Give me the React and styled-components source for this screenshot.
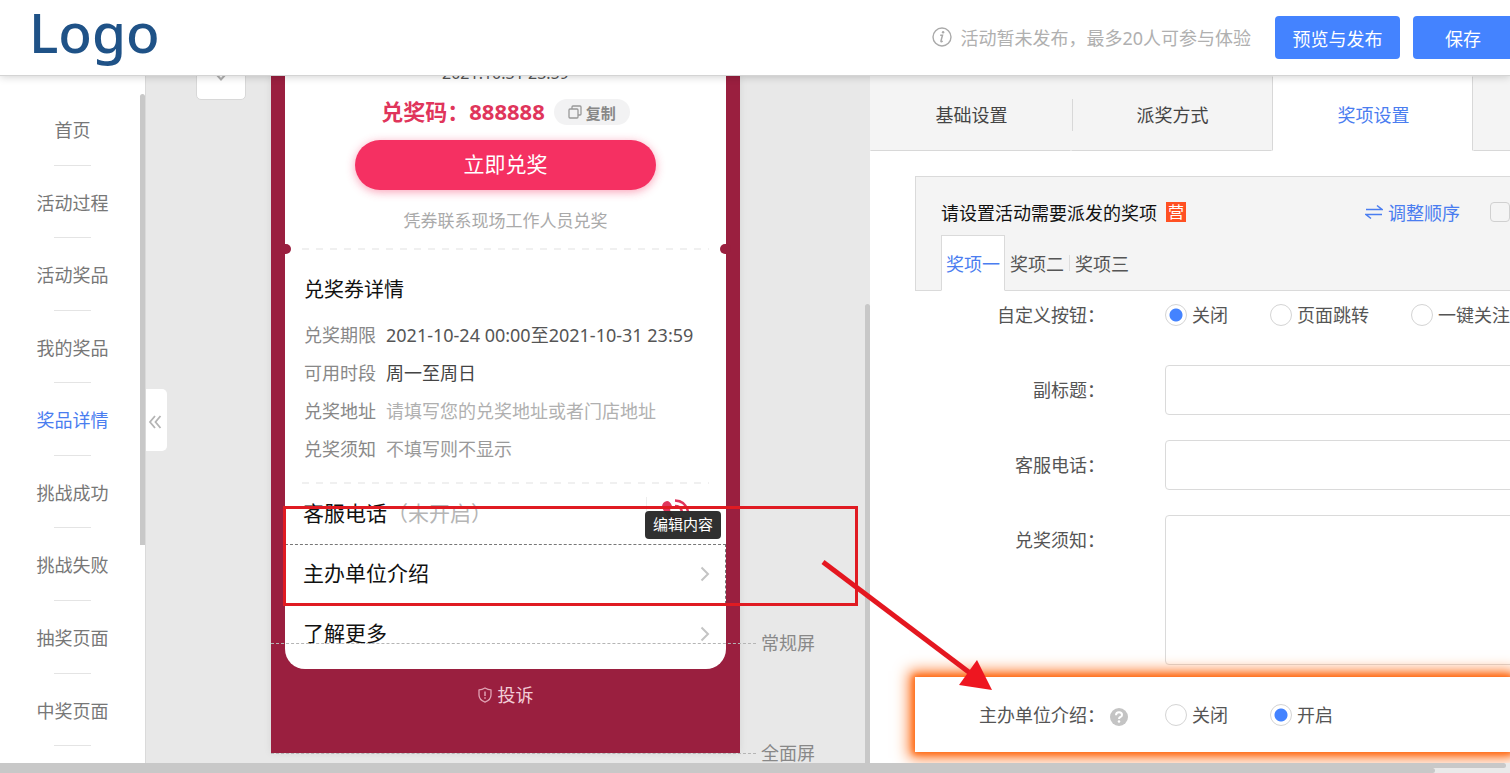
import React from 'react';
import styled, { createGlobalStyle, css } from 'styled-components';

const GlobalStyle = createGlobalStyle`
  * {
    box-sizing: border-box;
  }
  body {
    margin: 0;
    font-family: "Noto Sans", "Noto Sans CJK SC", sans-serif;
    font-size: 18px;
    color: #555555;
    background: #ffffff;
  }
  button, input, textarea {
    font-family: inherit;
    font-size: inherit;
  }
`;

const StyledApp = styled.div`
  display: flex;
  flex-direction: column;
  height: 100vh;
  overflow: hidden;
`;

const StyledHeader = styled.header`
  position: relative;
  z-index: 5;
  display: flex;
  flex: none;
  align-items: center;
  height: 76px;
  padding-left: 29px;
  background: #ffffff;
  border-bottom: 1px solid #d4d4d4;
  box-shadow: 0 1px 8px rgba(0, 0, 0, 0.18);
`;

const StyledLogo = styled.a`
  padding-bottom: 12px;
  color: #1f5287;
  font-size: 55px;
  font-weight: 500;
  line-height: 60px;
  text-decoration: none;
`;

const StyledNotice = styled.p`
  display: flex;
  align-items: center;
  gap: 8px;
  margin: 0 24px 0 auto;
  padding-bottom: 2px;
  color: #b0b0b0;
  white-space: nowrap;
`;

const StyledHeaderButton = styled.button`
  flex: none;
  width: ${props => props.$width};
  height: 43px;
  margin-right: ${props => props.$gap};
  padding: 0;
  color: #ffffff;
  background: #4483ff;
  border: none;
  border-radius: 4px;
  cursor: pointer;
`;

const StyledWorkspace = styled.div`
  position: relative;
  display: flex;
  flex: 1;
  min-height: 0;
`;

const StyledSidebar = styled.nav`
  position: relative;
  display: flex;
  flex: none;
  flex-direction: column;
  width: 146px;
  padding: 17px 0;
  border-right: 1px solid #dadada;
`;

const StyledSidebarLink = styled.a`
  display: flex;
  flex: 1;
  flex-direction: column;
  align-items: center;
  justify-content: space-between;
  padding-top: 23px;
  line-height: 28px;
  color: ${props => (props.$active ? '#4a7df0' : '#777777')};
  text-decoration: none;
  &::after {
    content: "";
    width: 37px;
    height: 1px;
    background: #e4e4e4;
  }
`;

const StyledVerticalThumb = styled.div`
  position: absolute;
  top: ${props => props.$top};
  right: 0;
  bottom: ${props => props.$bottom};
  width: 5px;
  background: #c8c8c8;
  border-radius: 3px 3px 0 0;
`;

const StyledCanvas = styled.main`
  position: relative;
  display: flex;
  flex: 0 0 724px;
  align-items: flex-start;
  justify-content: center;
  padding-right: 5px;
  background: #e8e8e8;
`;

const StyledCollapse = styled.button`
  position: absolute;
  top: 313px;
  left: 0;
  display: flex;
  align-items: center;
  justify-content: center;
  width: 21px;
  height: 62px;
  padding: 3px 4px 0 0;
  background: #ffffff;
  border: none;
  border-radius: 0 5px 5px 0;
`;

const StyledDropHandle = styled.button`
  position: absolute;
  top: -14px;
  left: 50px;
  display: flex;
  align-items: center;
  justify-content: center;
  width: 50px;
  height: 38px;
  padding: 0 0 6px;
  background: #ffffff;
  border: 1px solid #d8d8d8;
  border-radius: 5px;
`;

const StyledPhone = styled.section`
  position: relative;
  width: 469px;
  padding: 0 14px 43px;
  background: #9a1f3f;
  box-shadow: 0 0 8px rgba(0, 0, 0, 0.08);
`;

const StyledCard = styled.div`
  display: flex;
  flex-direction: column;
  padding-bottom: 5px;
  background: #ffffff;
  border-radius: 0 0 20px 20px;
`;

const StyledDate = styled.p`
  margin: -18px 0 0;
  font-size: 16px;
  line-height: 30px;
  text-align: center;
`;

const StyledCode = styled.div`
  display: flex;
  align-items: center;
  justify-content: center;
  gap: 9px;
  height: 48px;
  color: #e0355b;
  font-size: 22px;
  font-weight: bold;
`;

const StyledCodeText = styled.span`
  padding-bottom: 4px;
`;

const StyledCopy = styled.button`
  display: flex;
  align-items: center;
  justify-content: center;
  gap: 4px;
  width: 76px;
  height: 26px;
  padding: 0;
  color: #888888;
  font-size: 15px;
  font-weight: bold;
  background: #f2f2f3;
  border: none;
  border-radius: 13px;
`;

const StyledRedeem = styled.button`
  align-self: center;
  width: 301px;
  height: 50px;
  margin-top: 4px;
  padding: 0 0 4px;
  color: #ffffff;
  font-size: 21px;
  background: #f53062;
  border: none;
  border-radius: 25px;
  box-shadow: 0 2px 10px rgba(245, 48, 98, 0.45);
`;

const StyledHint = styled.p`
  margin: 16px 0 12px;
  color: #aaaaaa;
  font-size: 17px;
  line-height: 30px;
  text-align: center;
`;

const StyledDashes = styled.div`
  position: relative;
  height: 2px;
  margin: 0 17px;
  background: repeating-linear-gradient(90deg, #f0f0f0 0 7px, #ffffff 7px 14px);
  ${props => props.$notched && css`
    &::before,
    &::after {
      content: "";
      position: absolute;
      top: -4px;
      width: 11px;
      height: 10px;
      background: #9a1f3f;
      border-radius: 5px;
    }
    &::before {
      left: -22px;
    }
    &::after {
      right: -22px;
    }
  `}
`;

const StyledCardTitle = styled.h2`
  margin: 20px 19px 6px;
  color: #111111;
  font-size: 20px;
  font-weight: normal;
  line-height: 40px;
`;

const StyledDetails = styled.dl`
  display: grid;
  grid-template-columns: auto 1fr;
  column-gap: 10px;
  margin: 0 19px 14px;
  line-height: 38px;
`;

const StyledTerm = styled.dt`
  color: #888888;
`;

const StyledValue = styled.dd`
  margin: 0;
  color: ${props => props.$color};
  white-space: nowrap;
`;

const StyledCell = styled.div`
  display: flex;
  align-items: center;
  height: 60px;
  padding: 0 15px 0 17px;
  color: #111111;
  font-size: 21px;
  border: 1px dashed ${props => (props.$editing ? '#777777' : 'transparent')};
  svg {
    margin-left: auto;
  }
`;

const StyledCellText = styled.span`
  padding-bottom: 4px;
`;

const StyledMuted = styled.span`
  color: #b5b5b5;
`;

const StyledCall = styled.span`
  display: flex;
  height: 34px;
  margin-left: auto;
  padding: 0 19px 0 14px;
  border-left: 1px solid #eeeeee;
`;

const StyledTooltip = styled.span`
  position: absolute;
  right: 19px;
  bottom: 214px;
  z-index: 3;
  width: 76px;
  height: 28px;
  color: #ffffff;
  font-size: 15px;
  line-height: 26px;
  text-align: center;
  background: rgba(40, 40, 40, 0.96);
  border-radius: 4px;
`;

const StyledComplain = styled.a`
  display: flex;
  align-items: center;
  justify-content: center;
  gap: 6px;
  margin-top: 11px;
  color: #f2cdd8;
  line-height: 30px;
  text-decoration: none;
`;

const StyledFold = styled.div`
  position: absolute;
  bottom: ${props => props.$bottom};
  left: 0;
  z-index: 1;
  width: 485px;
  border-top: 1px dashed #b5b5b5;
`;

const StyledFoldLabel = styled.span`
  position: absolute;
  top: -16px;
  left: 490px;
  color: #888888;
  line-height: 30px;
  white-space: nowrap;
`;

const StyledFrame = styled.div`
  position: absolute;
  right: -118px;
  bottom: 147px;
  left: 12px;
  z-index: 2;
  height: 100px;
  border: 3px solid #e01b22;
`;

const StyledArrow = styled.svg`
  position: absolute;
  top: 480px;
  left: 815px;
  z-index: 4;
`;

const StyledPanel = styled.section`
  display: flex;
  flex: 1;
  flex-direction: column;
  min-width: 0;
  overflow: hidden;
`;

const StyledTabs = styled.div`
  display: flex;
  flex: none;
  height: 75px;
`;

const StyledTab = styled.button`
  position: relative;
  flex: none;
  width: 201px;
  padding: 0 0 0 2px;
  color: ${props => (props.$active ? '#4a7df0' : '#444444')};
  background: ${props => (props.$active ? '#ffffff' : '#f4f4f4')};
  border: 1px solid transparent;
  border-color: ${props => (props.$active ? 'transparent #d8d8d8' : 'transparent transparent #d8d8d8')};
  ${props => props.$divided && css`
    &::after {
      content: "";
      position: absolute;
      top: 22px;
      right: -3px;
      z-index: 1;
      height: 32px;
      border-left: 1px solid #d8d8d8;
    }
  `}
`;

const StyledContent = styled.form`
  display: flex;
  flex-direction: column;
  padding: 25px 0 0 45px;
`;

const StyledPrizes = styled.div`
  display: flex;
  flex: none;
  flex-direction: column;
  justify-content: space-between;
  height: 115px;
  margin-bottom: -1px;
  padding: 19px 0 0 25px;
  background: #f4f4f4;
  border: 1px solid #dadada;
  border-right: none;
`;

const StyledPrizeTop = styled.div`
  display: flex;
  align-items: center;
  height: 32px;
  color: #111111;
  white-space: nowrap;
`;

const StyledBadge = styled.span`
  width: 20px;
  margin-left: 9px;
  color: #ffffff;
  font-size: 16px;
  line-height: 20px;
  text-align: center;
  background: #ff5022;
`;

const StyledReorder = styled.button`
  display: flex;
  align-items: center;
  gap: 5px;
  margin: 0 30px 0 auto;
  padding: 0;
  color: #4a7df0;
  background: none;
  border: none;
`;

const StyledCheckbox = styled.input`
  flex: none;
  width: 20px;
  height: 20px;
  margin: 0;
  appearance: none;
  border: 1px solid #d0d0d0;
  border-radius: 4px;
`;

const StyledPrizeTabs = styled.div`
  display: flex;
  height: 56px;
  margin-bottom: -1px;
`;

const StyledPrizeTab = styled.button`
  width: 64px;
  padding: 0;
  color: ${props => (props.$active ? '#4a7df0' : '#555555')};
  white-space: nowrap;
  background: ${props => (props.$active ? '#ffffff' : 'transparent')};
  border: 1px solid ${props => (props.$active ? '#dadada' : 'transparent')};
  border-bottom-color: transparent;
`;

const StyledPrizeDivider = styled.span`
  align-self: center;
  height: 16px;
  border-left: 1px solid #dddddd;
`;

const StyledRow = styled.div`
  display: flex;
  flex: none;
  margin-bottom: ${props => props.$gap || '25px'};
  ${props => props.$highlight && css`
    align-items: center;
    height: 75px;
    background: #ffffff;
    box-shadow: 0 0 6px 2px #ff6a14, 0 0 14px 6px #ff7a2c;
  `}
`;

const labelText = css`
  flex: none;
  width: 190px;
  line-height: 50px;
  text-align: right;
`;

const StyledLabel = styled.label`
  ${labelText}
  margin-right: 60px;
`;

const StyledLegend = styled.span`
  ${labelText}
`;

const StyledHelp = styled.span`
  display: flex;
  align-items: center;
  width: 60px;
  padding: 4px 0 0 5px;
`;

const controlBox = css`
  flex: 1 0 400px;
  padding: 12px;
  background: #ffffff;
  border: 1px solid #dadada;
  border-radius: 4px;
`;

const StyledInput = styled.input`
  ${controlBox}
  height: 50px;
`;

const StyledTextarea = styled.textarea`
  ${controlBox}
  height: 150px;
  resize: none;
`;

const StyledOptions = styled.div`
  display: flex;
  gap: 42px;
`;

const StyledOption = styled.label`
  display: flex;
  align-items: center;
  gap: 5px;
  line-height: 50px;
  white-space: nowrap;
`;

const StyledRadio = styled.input`
  width: 22px;
  height: 22px;
  margin: 0;
  appearance: none;
  background: #ffffff;
  border: 1px solid #d4d4d4;
  border-radius: 50%;
  &:checked {
    background: radial-gradient(circle, #4483ff 6px, #ffffff 7px);
  }
`;

const StyledScrollTrack = styled.div`
  position: relative;
  z-index: 5;
  flex: none;
  height: 5px;
  background: #eaeaea;
`;

const StyledScrollThumb = styled.div`
  width: ${props => props.$width};
  height: 5px;
  background: #c8c8c8;
  border-radius: 0 3px 3px 0;
`;

const pages = [
  '首页', '活动过程', '活动奖品', '我的奖品', '奖品详情', '挑战成功', '挑战失败', '抽奖页面', '中奖页面'
];

const details = [
  { term: '兑奖期限', value: '2021-10-24 00:00至2021-10-31 23:59', color: '#555555' },
  { term: '可用时段', value: '周一至周日', color: '#444444' },
  { term: '兑奖地址', value: '请填写您的兑奖地址或者门店地址', color: '#b0b0b0' },
  { term: '兑奖须知', value: '不填写则不显示', color: '#999999' },
];

const App = () => {
  return (
    <StyledApp>
      <GlobalStyle />
      <Header />
      <StyledWorkspace>
        <Sidebar current='奖品详情' />
        <Canvas />
        <Settings />
        <StyledArrow width="180" height="136" aria-hidden="true">
          <path d="M8 6 L155 117" stroke="#e41720" strokeWidth="5" />
          <path d="M177 134 L144 129 L162 104 Z" fill="#ee1620" />
        </StyledArrow>
      </StyledWorkspace>
      <StyledScrollTrack><StyledScrollThumb $width="calc(100% - 4px)" /></StyledScrollTrack>
      <StyledScrollTrack><StyledScrollThumb $width="95%" /></StyledScrollTrack>
    </StyledApp>
  );
}

const Header = () => {
  return (
    <StyledHeader>
      <StyledLogo href="#">Logo</StyledLogo>
      <StyledNotice>
        <svg width="20" height="20" viewBox="0 0 20 20" fill="none" stroke="#aaaaaa">
          <circle cx="10" cy="10" r="9" strokeWidth="1.4" />
          <path d="M8.2 8.3h2.3l-1.5 5.6q-.3 1.4 1.7.3" strokeWidth="1.5" />
          <circle cx="11.1" cy="5.3" r="1.2" fill="#aaaaaa" stroke="none" />
        </svg>
        活动暂未发布，最多20人可参与体验
      </StyledNotice>
      <StyledHeaderButton $width="125px" $gap="13px">预览与发布</StyledHeaderButton>
      <StyledHeaderButton $width="100px" $gap="-3px">保存</StyledHeaderButton>
    </StyledHeader>
  )
}

const Sidebar = ({current}) => {
  return (
    <StyledSidebar>
      {pages.map(page => (
        <StyledSidebarLink key={page} href="#" $active={page === current}>{page}</StyledSidebarLink>
      ))}
      <StyledVerticalThumb $top="18px" $bottom="218px" />
    </StyledSidebar>
  )
}

const Chevron = () => {
  return (
    <svg width="10" height="16" viewBox="0 0 10 16" fill="none" stroke="#c4c4c4" strokeWidth="2">
      <path d="M1.5 1.5 8 8 1.5 14.5" />
    </svg>
  )
}

const Canvas = () => {
  return (
    <StyledCanvas>
      <StyledDropHandle aria-label="展开">
        <svg width="10" height="8" viewBox="0 0 10 8" fill="none" stroke="#b0b0b0" strokeWidth="2">
          <path d="M1 1 5 5.500 9 1" />
        </svg>
      </StyledDropHandle>
      <StyledCollapse aria-label="收起">
        <svg width="14" height="14" viewBox="0 0 14 14" fill="none" stroke="#b4b4b4" strokeWidth="1.8">
          <path d="M7 1 2 7 7 13M12.500 1 7.500 7l5 6" />
        </svg>
      </StyledCollapse>
      <StyledPhone>
        <Coupon />
        <StyledComplain href="#">
          <svg width="14" height="16" viewBox="0 0 14 16" fill="none" stroke="#e0a3b4" strokeWidth="1.3">
            <path d="M7 1Q10 2.800 13 2.800V8q0 4.800-6 7.200Q1 12.800 1 8V2.800Q4 2.800 7 1Z" strokeLinejoin="round" />
            <path d="M7 4.500v4.500M7 10.300v1.500" strokeWidth="1.500" />
          </svg>
          投诉
        </StyledComplain>
        <StyledTooltip role="tooltip">编辑内容</StyledTooltip>
        <StyledFold $bottom="109px"><StyledFoldLabel>常规屏</StyledFoldLabel></StyledFold>
        <StyledFold $bottom="-1px"><StyledFoldLabel>全面屏</StyledFoldLabel></StyledFold>
        <StyledFrame />
      </StyledPhone>
      <StyledVerticalThumb $top="228px" $bottom="0" />
    </StyledCanvas>
  )
}

const Coupon = () => {
  return (
    <StyledCard>
      <StyledDate>2021.10.31 23:59</StyledDate>
      <StyledCode>
        <StyledCodeText>兑奖码：888888</StyledCodeText>
        <StyledCopy>
          <svg width="14" height="14" viewBox="0 0 14 14" fill="none" stroke="#999999" strokeWidth="1.3">
            <rect x="1" y="4" width="9" height="9" rx="1" />
            <path d="M4 4V2q0-1 1-1h7q1 0 1 1v7q0 1-1 1h-2" />
          </svg>
          复制
        </StyledCopy>
      </StyledCode>
      <StyledRedeem>立即兑奖</StyledRedeem>
      <StyledHint>凭券联系现场工作人员兑奖</StyledHint>
      <StyledDashes $notched />
      <StyledCardTitle>兑奖券详情</StyledCardTitle>
      <StyledDetails>
        {details.map(item => (
          <React.Fragment key={item.term}>
            <StyledTerm>{item.term}</StyledTerm>
            <StyledValue $color={item.color}>{item.value}</StyledValue>
          </React.Fragment>
        ))}
      </StyledDetails>
      <StyledDashes />
      <StyledCell>
        <StyledCellText>客服电话<StyledMuted>（未开启）</StyledMuted></StyledCellText>
        <StyledCall>
          <svg width="30" height="30" viewBox="0 0 30 30" fill="none" stroke="#e0355b" strokeWidth="2.400">
            <path d="M6 4Q9 4 11 9L9 13Q12 19 17 21L20 19Q25 21 25 24Q22 29 17 27Q5 22 1 10Q1 5 6 4Z" fill="#e0355b" stroke="none" />
            <path d="M14 3.500Q25 4 27 15M14 9Q20 9 21 15" />
          </svg>
        </StyledCall>
      </StyledCell>
      <StyledCell $editing><StyledCellText>主办单位介绍</StyledCellText><Chevron /></StyledCell>
      <StyledCell><StyledCellText>了解更多</StyledCellText><Chevron /></StyledCell>
    </StyledCard>
  )
}

const RadioGroup = ({name, options, selected}) => {
  return (
    <StyledOptions>
      {options.map(option => (
        <StyledOption key={option}>
          <StyledRadio type="radio" name={name} value={option} defaultChecked={option === selected} />
          {option}
        </StyledOption>
      ))}
    </StyledOptions>
  )
}

const Settings = () => {
  return (
    <StyledPanel>
      <StyledTabs>
        <StyledTab $divided>基础设置</StyledTab>
        <StyledTab>派奖方式</StyledTab>
        <StyledTab $active>奖项设置</StyledTab>
        <StyledTab aria-label="更多设置" />
      </StyledTabs>
      <StyledContent>
        <StyledPrizes>
          <StyledPrizeTop>
            请设置活动需要派发的奖项
            <StyledBadge>营</StyledBadge>
            <StyledReorder type="button">
              <svg width="18" height="16" viewBox="0 0 18 16" fill="none" stroke="#4a7df0" strokeWidth="1.5">
                <path d="M1 5.500h16L12 1.500M17 10.500H1l5 4" />
              </svg>
              调整顺序
            </StyledReorder>
            <StyledCheckbox type="checkbox" aria-label="启用" />
          </StyledPrizeTop>
          <StyledPrizeTabs>
            <StyledPrizeTab type="button" $active>奖项一</StyledPrizeTab>
            <StyledPrizeTab type="button">奖项二</StyledPrizeTab>
            <StyledPrizeDivider />
            <StyledPrizeTab type="button">奖项三</StyledPrizeTab>
          </StyledPrizeTabs>
        </StyledPrizes>
        <StyledRow>
          <StyledLabel as="span">自定义按钮：</StyledLabel>
          <RadioGroup name="custom" options={['关闭', '页面跳转', '一键关注']} selected="关闭" />
        </StyledRow>
        <StyledRow>
          <StyledLabel htmlFor="subtitle">副标题：</StyledLabel>
          <StyledInput id="subtitle" type="text" />
        </StyledRow>
        <StyledRow>
          <StyledLabel htmlFor="phone">客服电话：</StyledLabel>
          <StyledInput id="phone" type="text" />
        </StyledRow>
        <StyledRow $gap="12px">
          <StyledLabel htmlFor="notes">兑奖须知：</StyledLabel>
          <StyledTextarea id="notes" />
        </StyledRow>
        <StyledRow $highlight>
          <StyledLegend>主办单位介绍：</StyledLegend>
          <StyledHelp>
            <svg width="18" height="18" viewBox="0 0 18 18" fill="none">
              <circle cx="9" cy="9" r="9" fill="#c4c4c4" />
              <path d="M6 7.200Q6 4.300 9 4.300T12 6.900Q12 8.200 10.300 9Q9 9.600 9 11" stroke="#ffffff" strokeWidth="2" />
              <circle cx="9" cy="13.500" r="1.300" fill="#ffffff" />
            </svg>
          </StyledHelp>
          <RadioGroup name="organizer" options={['关闭', '开启']} selected="开启" />
        </StyledRow>
      </StyledContent>
    </StyledPanel>
  )
}

export default App;
